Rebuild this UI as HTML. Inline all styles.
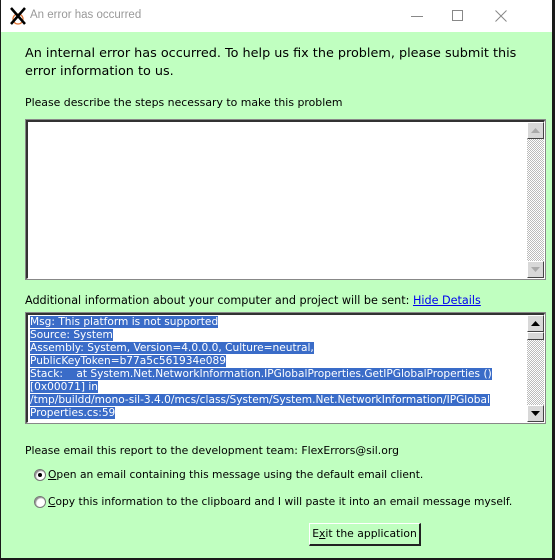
<!DOCTYPE html>
<html><head><meta charset="utf-8"><style>
*{margin:0;padding:0;box-sizing:border-box}
body{width:555px;height:560px;background:#1a1a1a;position:relative;overflow:hidden;font-family:"DejaVu Sans","Liberation Sans",sans-serif;color:#000}
#win{position:absolute;left:1px;top:0;width:551px;height:558px;background:#c0ffc0}
#title{position:absolute;left:0;top:0;width:551px;height:32px;background:#fff}
.t{position:absolute;white-space:nowrap}
.box{position:absolute;background:#fff;border-top:2px solid #333;border-left:2px solid #333;border-right:1px solid #fff;border-bottom:1px solid #fff;outline:1px solid #888}
.sb{position:absolute;right:0;top:0;bottom:0;width:17px;background-color:#ddd;background-image:repeating-conic-gradient(#bbb 0 25%,#fff 0 50%);background-size:2px 2px}
.btn{position:absolute;right:0;width:17px;height:17px;background:#d8d8d8;border-top:1px solid #fff;border-left:1px solid #fff;border-right:1px solid #444;border-bottom:1px solid #444}
.sel{background:#3a6cc8;color:#fff}
.radio{position:absolute;width:12px;height:12px;border-radius:50%;background:#fff;border:1px solid #777;box-shadow:inset 1px 1px 1px #888}
</style></head><body>
<div id="win">
 <div id="title">
  <svg style="position:absolute;left:8px;top:7px" width="18" height="18" viewBox="0 0 18 18">
   <circle cx="9" cy="12" r="5" fill="none" stroke="#e07030" stroke-width="1.3"/>
   <path d="M2 1 L16 17 M16 1 L2 17" stroke="#000" stroke-width="2.5"/>
  </svg>
  <div class="t" style="left:29px;top:9px;font-size:11.5px;color:#999;font-family:'Liberation Sans',sans-serif">An error has occurred</div>
  <div style="position:absolute;left:410px;top:16px;width:12px;height:1px;background:#888"></div>
  <div style="position:absolute;left:451px;top:10px;width:11px;height:11px;border:1px solid #888"></div>
  <svg style="position:absolute;left:494px;top:10px" width="12" height="12"><path d="M0.5 0.5L11.5 11.5M11.5 0.5L0.5 11.5" stroke="#888"/></svg>
 </div>
 <div class="t" style="left:24px;top:45px;font-size:12.8px;line-height:18px">An internal error has occurred. To help us fix the problem, please submit this<br>error information to us.</div>
 <div class="t" style="left:24px;top:96px;font-size:10.9px">Please describe the steps necessary to make this problem</div>
 <div class="box" style="left:25px;top:120px;width:519px;height:159px">
  <div class="sb"><div class="btn" style="top:0"><svg width="15" height="15"><path d="M3 10h9l-4.5-5z" fill="#aaa"/></svg></div>
  <div class="btn" style="bottom:0"><svg width="15" height="15"><path d="M3 5h9l-4.5 5z" fill="#aaa"/></svg></div></div>
 </div>
 <div class="t" style="left:24px;top:294px;font-size:11.2px">Additional information about your computer and project will be sent: <span style="color:#00e;text-decoration:underline">Hide Details</span></div>
 <div class="box" style="left:25px;top:313px;width:519px;height:110px;overflow:hidden">
  <div style="position:absolute;left:2px;top:1px;font-size:10.6px;line-height:13px;white-space:nowrap">
   <span class="sel">Msg: This platform is not supported</span><br>
   <span class="sel">Source: System</span><br>
   <span class="sel">Assembly: System, Version=4.0.0.0, Culture=neutral, </span><br>
   <span class="sel">PublicKeyToken=b77a5c561934e089</span><br>
   <span class="sel">Stack:&nbsp;&nbsp;&nbsp; at System.Net.NetworkInformation.IPGlobalProperties.GetIPGlobalProperties ()</span><br>
   <span class="sel">[0x00071] in </span><br>
   <span class="sel">/tmp/buildd/mono-sil-3.4.0/mcs/class/System/System.Net.NetworkInformation/IPGlobal</span><br>
   <span class="sel">Properties.cs:59 </span>
  </div>
  <div class="sb"><div class="btn" style="top:0"><svg width="15" height="15"><path d="M3 10h9l-4.5-5z" fill="#000"/></svg></div>
  <div class="btn" style="top:17px;height:8px"></div>
  <div class="btn" style="bottom:0"><svg width="15" height="15"><path d="M3 5h9l-4.5 5z" fill="#000"/></svg></div></div>
 </div>
 <div class="t" style="left:24px;top:444px;font-size:10.8px">Please email this report to the development team: FlexErrors@sil.org</div>
 <div class="radio" style="left:33px;top:469px"><div style="position:absolute;left:3px;top:3px;width:4px;height:4px;border-radius:50%;background:#000"></div></div>
 <div class="t" style="left:47px;top:468px;font-size:10.7px"><u>O</u>pen an email containing this message using the default email client.</div>
 <div class="radio" style="left:33px;top:496px"></div>
 <div class="t" style="left:47px;top:495px;font-size:10.7px"><u>C</u>opy this information to the clipboard and I will paste it into an email message myself.</div>
 <div style="position:absolute;left:308px;top:523px;width:112px;height:23px;background:#c0ffc0;border-top:1px solid #fff;border-left:1px solid #fff;border-right:2px solid #222;border-bottom:2px solid #222;font-size:10.8px;text-align:center;line-height:20px;white-space:nowrap">E<u>x</u>it the application</div>
</div>
</body></html>
